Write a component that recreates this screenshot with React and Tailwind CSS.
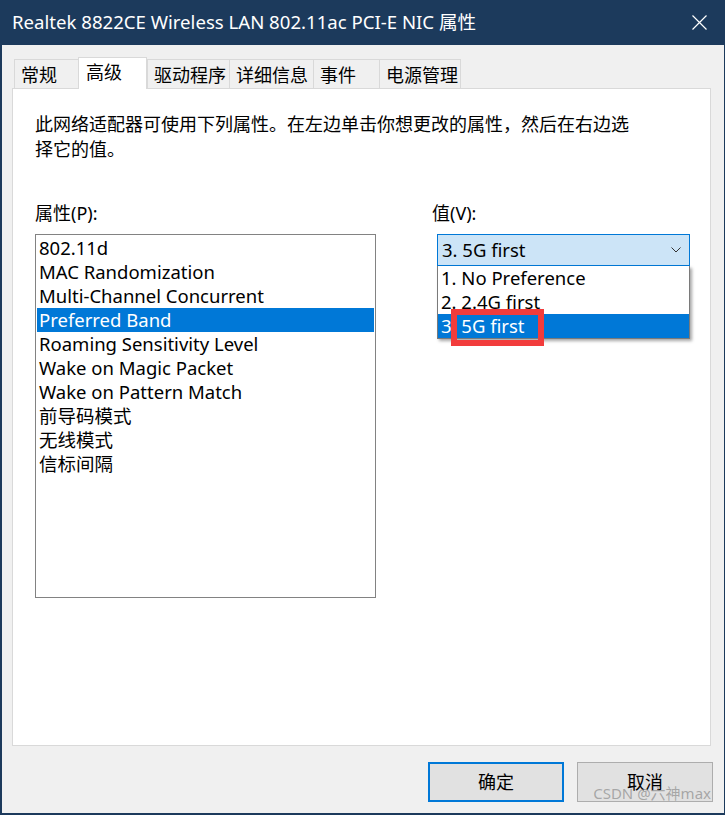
const tabs = [
  { label: '常规', w: 'w-[64px]' },
  { label: '高级', w: 'w-[69px]', active: true },
  { label: '驱动程序', w: 'w-[82px]' },
  { label: '详细信息', w: 'w-[84px]' },
  { label: '事件', w: 'w-[66px]' },
  { label: '电源管理', w: 'w-[82px]', last: true },
];

const props = [
  '802.11d',
  'MAC Randomization',
  'Multi-Channel Concurrent',
  'Preferred Band',
  'Roaming Sensitivity Level',
  'Wake on Magic Packet',
  'Wake on Pattern Match',
  '前导码模式',
  '无线模式',
  '信标间隔',
];

const values = ['1. No Preference', '2. 2.4G first', '3. 5G first'];

function TitleBar() {
  return (
    <div className="h-[45px] shrink-0 bg-[#1c3a5c] flex items-center justify-between pl-[10px] pr-[17px] text-white">
      <span className="text-[18.6px] leading-[24px] -mt-[1px]">Realtek 8822CE Wireless LAN 802.11ac PCI-E NIC 属性</span>
      <svg width="15" height="15" viewBox="0 0 15 15" className="-mt-[1px]">
        <path d="M0.5 0.5 L14.5 14.5 M14.5 0.5 L0.5 14.5" stroke="#fff" strokeWidth="1.2" fill="none" />
      </svg>
    </div>
  );
}

function Tabs() {
  return (
    <div className="h-[31px] flex items-end pl-[2px]">
      {tabs.map((t) =>
        t.active ? (
          <div
            key={t.label}
            className={`${t.w} h-[32px] -mb-[1px] relative z-10 bg-white border border-b-0 border-[#d9d9d9] pl-[7px] pt-[2px] text-[18px] leading-[24px]`}
          >
            {t.label}
          </div>
        ) : (
          <div
            key={t.label}
            className={`${t.w} h-[29px] bg-[#f0f0f0] border-t border-l border-[#d9d9d9] ${t.last ? 'border-r' : ''} pl-[6px] pt-[3px] text-[18px] leading-[24px]`}
          >
            {t.label}
          </div>
        )
      )}
    </div>
  );
}

function ValueCombo() {
  return (
    <div className="relative ml-[5px] mt-[8px] w-[253px]">
      <div className="h-[32px] border border-[#0078d7] bg-[#cce4f7] flex items-center justify-between pl-[4px] pr-[8px]">
        <span className="text-[18.5px] leading-[24px]">3. 5G first</span>
        <svg width="10" height="6" viewBox="0 0 10 6">
          <path d="M0.5 0.5 L5 5 L9.5 0.5" stroke="#333" strokeWidth="1" fill="none" />
        </svg>
      </div>
      <div className="absolute left-0 top-full w-full z-20 bg-white border border-[#7a7a7a] border-t-0 shadow-[2px_2px_3px_rgba(0,0,0,0.35)]">
        {values.map((v, i) => (
          <div
            key={v}
            className={`h-[24px] pl-[3px] text-[18.5px] leading-[24px] ${
              i === 2 ? 'bg-[#0078d7] text-white' : ''
            }`}
          >
            {v}
          </div>
        ))}
      </div>
      <div className="absolute left-[14px] top-[75px] w-[93px] h-[37px] z-30 border-[6px] border-[#f23c3c]" />
    </div>
  );
}

export default function App() {
  return (
    <div className="w-[725px] h-[815px] relative flex flex-col bg-[#f0f0f0] border-l-2 border-r border-b-2 border-[#1c3a5c] text-black font-['Noto_Sans','Noto_Sans_CJK_SC',sans-serif] overflow-hidden">
      <TitleBar />
      <div className="flex-1 flex flex-col pl-[10px] pr-[13px] pt-[12px]">
        <Tabs />
        <div className="h-[658px] bg-white border border-[#d9d9d9] pl-[22px] pt-[23px]">
          <p className="text-[18px] leading-[25px]">
            此网络适配器可使用下列属性。在左边单击你想更改的属性，然后在右边选
            <br />
            择它的值。
          </p>
          <div className="flex mt-[39px]">
            <div className="w-[341px] flex flex-col">
              <div className="text-[18px] leading-[25px]">属性(P):</div>
              <div className="mt-[8px] h-[364px] border border-[#828282] p-[1px]">
                {props.map((p) => (
                  <div
                    key={p}
                    className={`h-[24px] pl-[2px] text-[18.5px] leading-[24px] whitespace-nowrap ${
                      p === 'Preferred Band' ? 'bg-[#0078d7] text-white' : ''
                    }`}
                  >
                    {p}
                  </div>
                ))}
              </div>
            </div>
            <div className="ml-[56px] flex flex-col">
              <div className="text-[18px] leading-[25px]">值(V):</div>
              <ValueCombo />
            </div>
          </div>
        </div>
        <div className="mt-[16px] -mr-[2px] flex justify-end gap-[13px]">
          <button className="w-[136px] h-[40px] bg-[#e1e1e1] border-2 border-[#0078d7] text-[18px]">确定</button>
          <button className="w-[136px] h-[40px] bg-[#e1e1e1] border border-[#adadad] text-[18px]">取消</button>
        </div>
      </div>
      <div className="absolute right-[13px] bottom-[11px] z-40 text-[15px] leading-[18px] text-[#8c8c8c]/70 pointer-events-none">
        CSDN @六神max
      </div>
    </div>
  );
}
